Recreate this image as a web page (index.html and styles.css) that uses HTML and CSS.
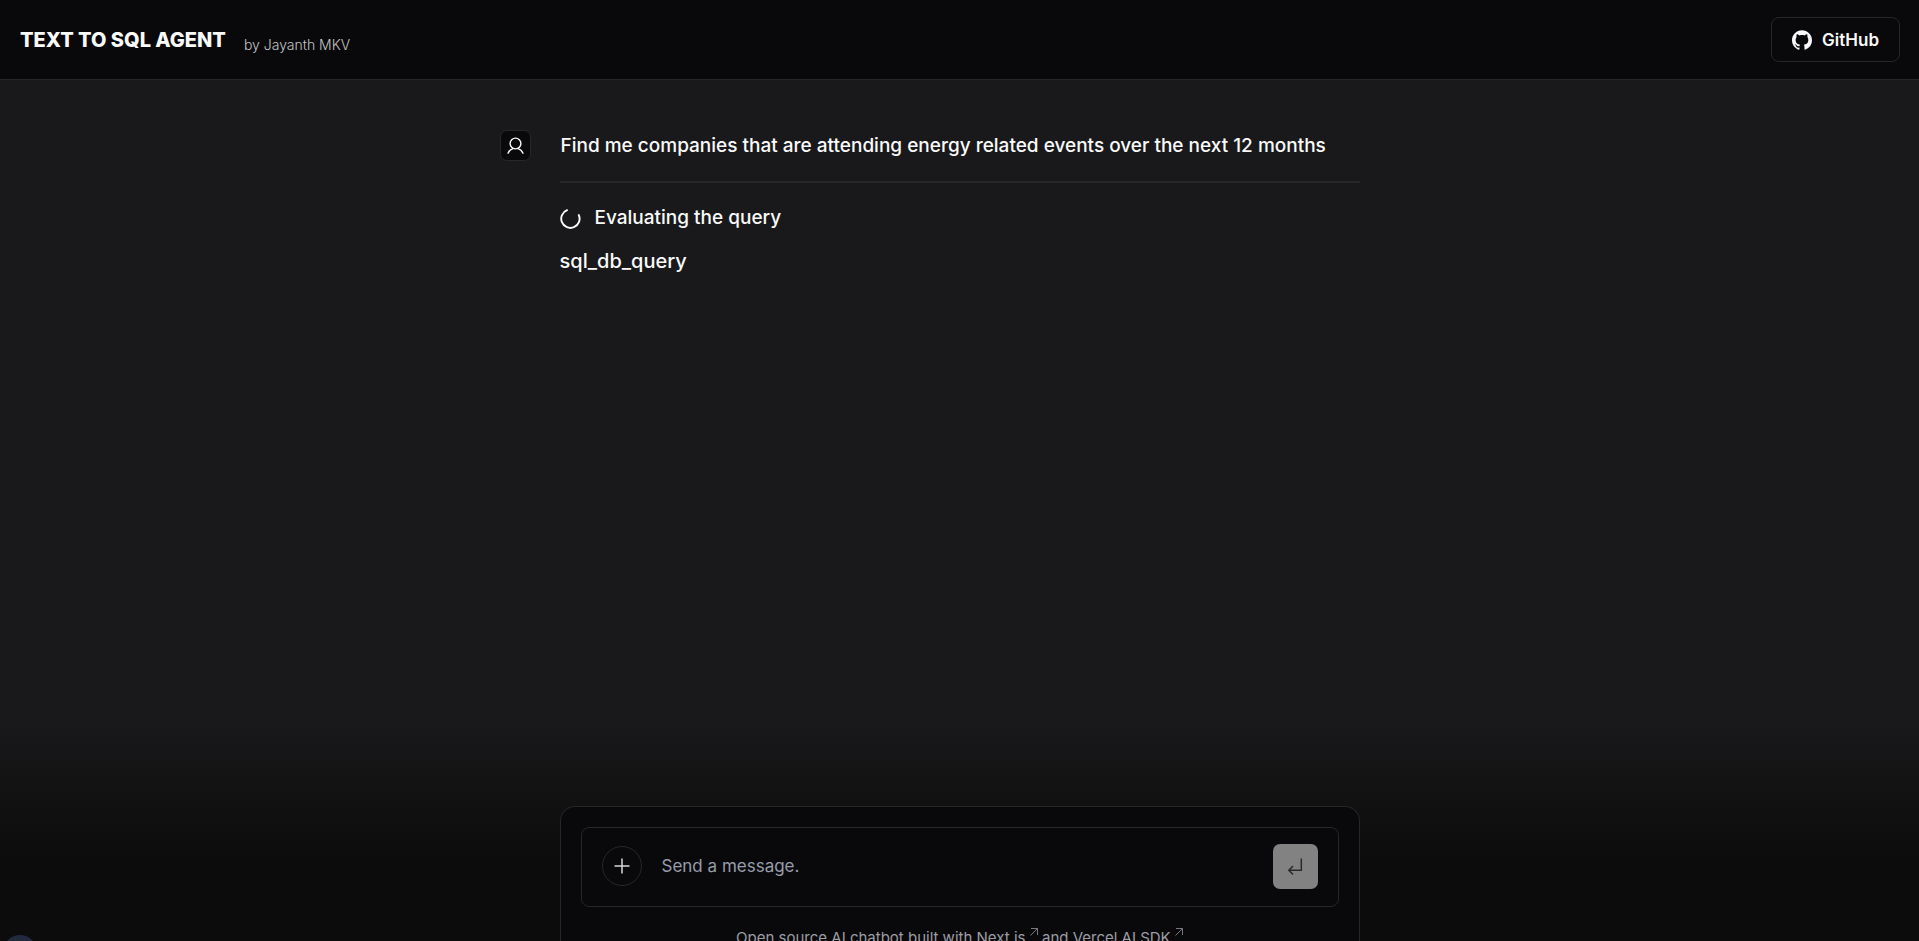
FILE: index.html
```html
<!DOCTYPE html>
<html lang="en">
<head>
<meta charset="utf-8">
<meta name="viewport" content="width=device-width, initial-scale=1">
<title>Text to SQL Agent</title>
<link rel="stylesheet" href="styles.css">
</head>
<body>
<header class="topbar">
  <div class="brand">
    <h1 class="brand-name">TEXT TO SQL AGENT</h1>
    <span class="brand-author">by Jayanth MKV</span>
  </div>
  <a class="github" href="#github">
    <svg class="icon-20" viewBox="0 0 24 24" fill="currentColor" aria-hidden="true"><path d="M12 .297c-6.63 0-12 5.373-12 12 0 5.303 3.438 9.8 8.205 11.385.6.113.82-.258.82-.577 0-.285-.01-1.04-.015-2.04-3.338.724-4.042-1.61-4.042-1.61C4.422 18.07 3.633 17.7 3.633 17.7c-1.087-.744.084-.729.084-.729 1.205.084 1.838 1.236 1.838 1.236 1.07 1.835 2.809 1.305 3.495.998.108-.776.417-1.305.76-1.605-2.665-.3-5.466-1.332-5.466-5.93 0-1.31.465-2.38 1.235-3.22-.135-.303-.54-1.523.105-3.176 0 0 1.005-.322 3.3 1.23.96-.267 1.98-.399 3-.405 1.02.006 2.04.138 3 .405 2.28-1.552 3.285-1.23 3.285-1.23.645 1.653.24 2.873.12 3.176.765.84 1.23 1.91 1.23 3.22 0 4.61-2.805 5.625-5.475 5.92.42.36.81 1.096.81 2.22 0 1.606-.015 2.896-.015 3.286 0 .315.21.69.825.57C20.565 22.092 24 17.592 24 12.297c0-6.627-5.373-12-12-12"/></svg>
    <span>GitHub</span>
  </a>
</header>

<main class="chat">
  <div class="thread">
    <article class="message">
      <div class="avatar">
        <svg class="icon-20" viewBox="0 0 20 20" fill="none" stroke="currentColor" stroke-width="1.4" stroke-linecap="round" aria-hidden="true"><circle cx="10.500" cy="7.500" r="5.400"/><path d="M3 17.200c1.100-2.600 3-4.100 5-4.600M18 17.200c-1.100-2.600-3-4.100-5-4.600"/></svg>
      </div>
      <p class="message-text">Find me companies that are attending energy related events over the next 12 months</p>
    </article>
    <hr class="divider">
    <div class="status" role="status">
      <svg class="spinner" viewBox="0 0 22 22" fill="none" stroke="currentColor" stroke-width="2" stroke-linecap="round" aria-hidden="true"><path d="M7.400 2.300A9.600 9.600 0 1 0 19.700 7.400"/></svg>
      <span>Evaluating the query</span>
    </div>
    <p class="tool-name">sql_db_query</p>
  </div>
</main>

<section class="composer">
  <div class="panel">
    <form class="prompt">
      <button class="new-chat" type="button" aria-label="New chat">
        <svg class="icon-20" viewBox="0 0 20 20" fill="none" stroke="currentColor" stroke-width="1.500" aria-hidden="true"><path d="M10 2.500v15M2.500 10h15"/></svg>
      </button>
      <input class="prompt-input" type="text" placeholder="Send a message." aria-label="Message">
      <button class="send" type="submit" aria-label="Send message" disabled>
        <svg class="icon-20" viewBox="0 0 20 20" fill="none" stroke="currentColor" stroke-width="1.500" aria-hidden="true"><path d="M16.300 2.500v11.700H4.200M8 9.900l-4.200 4.300L8 18.500"/></svg>
      </button>
    </form>
    <p class="credits">Open source AI chatbot built with
      <a href="#next">Next.js <svg class="arrow" viewBox="0 0 8 8" fill="none" stroke="currentColor" aria-hidden="true"><path d="M1 .500h6.500V7M7.500.500l-7 7"/></svg></a>
      and
      <a href="#sdk">Vercel AI SDK <svg class="arrow" viewBox="0 0 8 8" fill="none" stroke="currentColor" aria-hidden="true"><path d="M1 .500h6.500V7M7.500.500l-7 7"/></svg></a></p>
  </div>
</section>
<div class="account" aria-hidden="true"></div>
</body>
</html>
```
FILE: styles.css
```css
* {
  box-sizing: border-box;
}

body {
  display: flex;
  flex-direction: column;
  height: 100vh;
  margin: 0;
  overflow: hidden;
  background: #19191b;
  color: #fafafa;
  font-family: Inter, "Liberation Sans", sans-serif;
  font-size: 19px;
}

h1,
p {
  margin: 0;
}

a {
  color: inherit;
  text-decoration: none;
}

.icon-20 {
  width: 20px;
  height: 20px;
}

.topbar {
  display: flex;
  flex: none;
  align-items: center;
  justify-content: space-between;
  height: 80px;
  padding: 0 19px 0 20px;
  border-bottom: 1px solid #27272a;
  background: #09090b;
}

.brand {
  display: flex;
  align-items: flex-end;
  gap: 18px;
}

.brand-name {
  font-size: 20px;
  font-weight: 800;
  line-height: 28px;
}

.brand-author {
  color: #c4c4c6;
  font-size: 14px;
  font-weight: 300;
  line-height: 18px;
}

.github {
  display: flex;
  align-items: center;
  gap: 10px;
  height: 45px;
  padding: 0 20px;
  border: 1px solid #27272a;
  border-radius: 8px;
  font-size: 17px;
  font-weight: 600;
}

.chat {
  flex: 1;
  min-height: 0;
  padding-top: 50px;
}

.thread {
  width: 100%;
  max-width: 800px;
  margin: 0 auto;
  font-weight: 500;
}

.message {
  display: flex;
  align-items: center;
  gap: 30px;
  margin-left: -60px;
}

.avatar {
  display: grid;
  flex: none;
  place-items: center;
  width: 31px;
  height: 31px;
  border: 1px solid #27272a;
  border-radius: 7px;
  background: #09090b;
}

.message-text {
  line-height: 30px;
  white-space: nowrap;
}

.divider {
  height: 2px;
  margin: 20px 0;
  border: 0;
  background: #27272a;
}

.status {
  display: flex;
  align-items: center;
  gap: 14px;
  line-height: 30px;
}

.spinner {
  width: 21px;
  height: 21px;
}

.tool-name {
  margin-top: 13px;
  font-size: 20px;
  line-height: 30px;
}

.composer {
  flex: 0 0 240px;
  padding-top: 105px;
  overflow: hidden;
  background: linear-gradient(#19191b 20px, #0c0c0c 155px);
}

.panel {
  width: 100%;
  max-width: 800px;
  margin: 0 auto;
  padding: 20px;
  border: 1px solid #27272a;
  border-bottom: 0;
  border-radius: 15px 15px 0 0;
  background: #09090b;
}

.prompt {
  display: flex;
  align-items: center;
  height: 80px;
  padding: 0 20px 2px;
  border: 1px solid #27272a;
  border-radius: 8px;
}

.new-chat {
  display: grid;
  flex: none;
  place-items: center;
  width: 40px;
  height: 40px;
  padding: 0;
  border: 1px solid #27272a;
  border-radius: 50%;
  background: none;
  color: #d8d8da;
}

.prompt-input {
  flex: 1;
  min-width: 0;
  padding: 0 20px;
  border: 0;
  outline: 0;
  background: none;
  color: #fafafa;
  font: inherit;
  font-size: 17px;
}

.prompt-input::placeholder {
  color: #969dab;
  opacity: 1;
}

.send {
  display: grid;
  flex: none;
  place-items: center;
  width: 45px;
  height: 45px;
  padding: 0;
  border: 0;
  border-radius: 7px;
  background: #828282;
  color: #2a2a2c;
}

.credits {
  margin-top: 20px;
  color: #9d9da5;
  font-size: 15px;
  line-height: 22px;
  text-align: center;
}

.arrow {
  width: 8px;
  height: 8px;
  vertical-align: 7px;
  color: #77777d;
}

.account {
  position: fixed;
  bottom: -28px;
  left: 3px;
  width: 34px;
  height: 34px;
  border-radius: 50%;
  background: #202a3c;
}
```
